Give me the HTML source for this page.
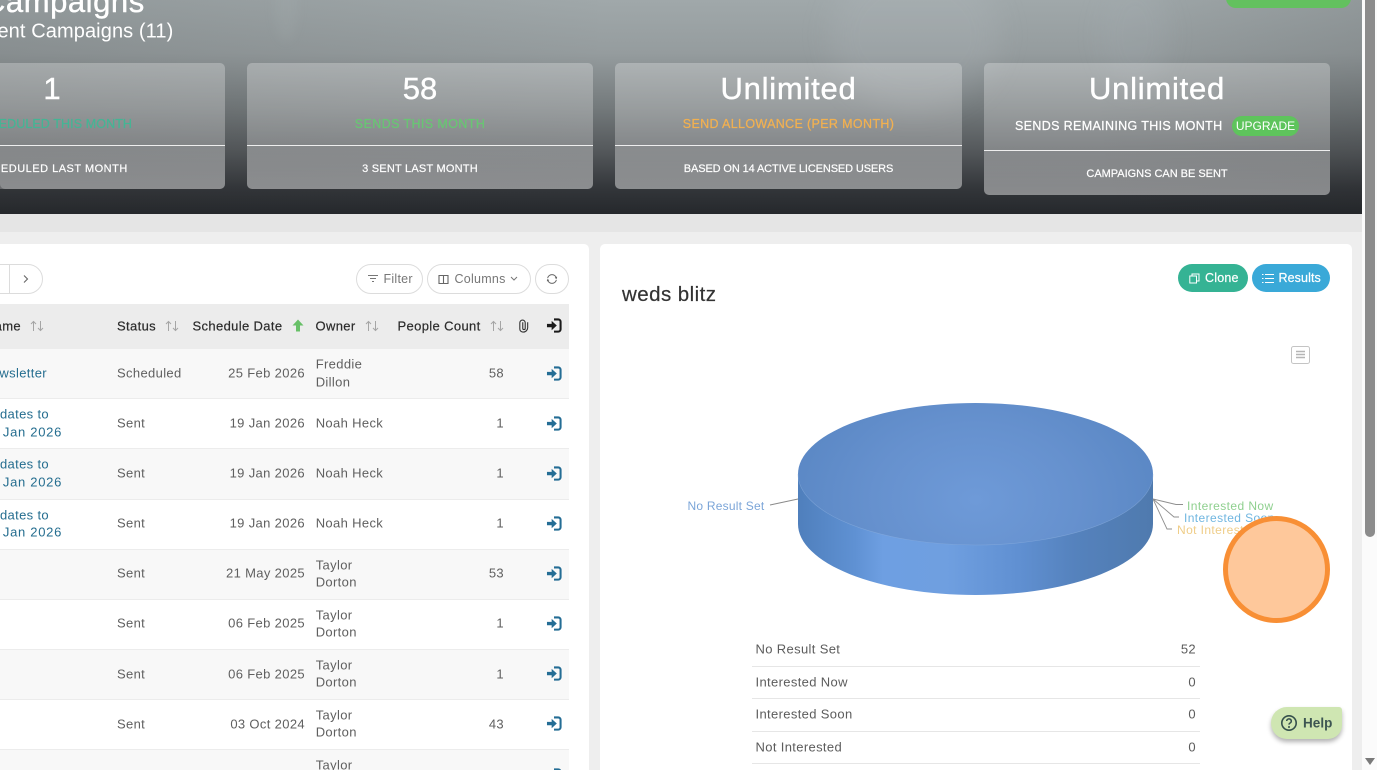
<!DOCTYPE html>
<html><head><meta charset="utf-8"><style>
html,body{margin:0;padding:0;width:1377px;height:770px;overflow:hidden;background:#fdfdfd}
*{box-sizing:border-box}
body{font-family:"Liberation Sans",sans-serif;position:relative}
.a{position:absolute;white-space:nowrap}
.c{transform:translate(-50%,-50%)}
.m{transform:translateY(-50%)}
.r{transform:translate(-100%,-50%)}
.card{position:absolute;background:rgba(255,255,255,.27);border-radius:5px}
.cb{position:absolute;background:linear-gradient(180deg,rgba(255,255,255,.04),rgba(255,255,255,.23));border-radius:0 0 5px 5px}
.t{font-size:13px;letter-spacing:.35px;color:#5f5f5f;margin-top:-1px}
.h{font-size:13px;letter-spacing:.36px;color:#2b2b2b;font-weight:400;-webkit-text-stroke:.2px #2b2b2b}
.l{font-size:13px;letter-spacing:.35px;color:#246d8f;margin-top:-1px}
.j{letter-spacing:.7px}
.row{position:absolute;left:0;width:569px;border-bottom:1px solid #ececec}
.btn{position:absolute;top:264px;height:30px;border:1px solid #dcdcdc;border-radius:15px;background:#fff;font-size:12.5px;color:#666;letter-spacing:.25px}
.s{font-size:13px;letter-spacing:.35px;color:#5c5c5c;margin-top:-1px}
.ln{position:absolute;left:752px;width:448px;height:1px;background:#e6e6e6}
.n{font-size:31px;color:#fff;-webkit-text-stroke:.4px #fff}
.lb{font-size:12.500px;letter-spacing:.4px;-webkit-text-stroke:.25px}
.bt{font-size:11px;color:#fff;-webkit-text-stroke:.2px #fff}
</style></head><body>
<svg width="0" height="0" style="position:absolute"><defs>
<symbol id="in" viewBox="0 0 16 16"><path d="M8 1.500h4.500a2.500 2.500 0 0 1 2.500 2.500v8a2.500 2.500 0 0 1-2.500 2.500H8" fill="none" stroke="currentColor" stroke-width="2.200"/><path d="M.5 6.200h5V3l5.500 5-5.500 5V9.800h-5z" fill="currentColor"/></symbol>
<symbol id="so" viewBox="0 0 14 12"><path d="M3.500 11V1.500M1 4l2.500-2.500L6 4M10.500 1v9.500M8 8l2.500 2.500L13 8" fill="none" stroke="currentColor" stroke-width="1"/></symbol>
</defs></svg>

<!-- header -->
<div class="a" style="left:0;top:0;width:1362px;height:214px;overflow:hidden;background:linear-gradient(180deg,#a0a8aa 0%,#959c9e 25%,#747a7c 50%,#55595c 70%,#33363a 88%,#25282c 100%)">
<div class="a" style="left:0;top:0;width:1362px;height:214px;background:linear-gradient(90deg,rgba(40,40,40,.12),rgba(0,0,0,0) 45%,rgba(0,0,0,0) 80%,rgba(20,20,20,.1))"></div>
<div class="a" style="left:274px;top:-30px;width:24px;height:72px;border-radius:50%;background:rgba(190,205,205,.09);filter:blur(5px)"></div>
<div class="a" style="left:830px;top:-40px;width:170px;height:150px;border-radius:50%;background:rgba(190,200,205,.16);filter:blur(14px)"></div>
<div class="a" style="left:1100px;top:-20px;width:70px;height:110px;border-radius:50%;background:rgba(190,200,205,.1);filter:blur(12px)"></div>
</div>
<div class="a" style="left:1226px;top:-12px;width:125px;height:20px;background:#63c15f;border-radius:10px"></div>
<div class="a m" style="left:-17px;top:2px;font-size:31px;font-weight:400;color:#fff;letter-spacing:.55px;-webkit-text-stroke:.4px #fff">Campaigns</div>
<div class="a m" style="left:-16px;top:31.500px;font-size:20px;color:#fff;letter-spacing:.1px">Sent Campaigns (11)</div>

<div class="card" style="left:-120px;top:63px;width:345px;height:126px"></div>
<div class="card" style="left:247px;top:63px;width:346px;height:126px"></div>
<div class="card" style="left:615px;top:63px;width:347px;height:126px"></div>
<div class="card" style="left:984px;top:63px;width:346px;height:132px"></div>
<div class="cb" style="left:0;top:146px;width:225px;height:43px"></div>
<div class="cb" style="left:247px;top:146px;width:346px;height:43px"></div>
<div class="cb" style="left:615px;top:146px;width:347px;height:43px"></div>
<div class="cb" style="left:984px;top:151px;width:346px;height:44px"></div>
<div class="a" style="left:0;top:145px;width:225px;height:1px;background:#eee"></div>
<div class="a" style="left:247px;top:145px;width:346px;height:1px;background:#eee"></div>
<div class="a" style="left:615px;top:145px;width:347px;height:1px;background:#eee"></div>
<div class="a" style="left:984px;top:150px;width:346px;height:1px;background:#eee"></div>

<div class="a c n" style="left:52px;top:89px">1</div>
<div class="a c n" style="left:420px;top:89px">58</div>
<div class="a c n" style="left:788.500px;top:89px;letter-spacing:.75px">Unlimited</div>
<div class="a c n" style="left:1157px;top:89px;letter-spacing:.75px">Unlimited</div>

<div class="a c lb" style="left:52px;top:124px;color:#45b595;letter-spacing:.1px">SCHEDULED THIS MONTH</div>
<div class="a c lb" style="left:420px;top:124px;color:#68c673">SENDS THIS MONTH</div>
<div class="a c lb" style="left:788.500px;top:124px;color:#f2b050;letter-spacing:.35px">SEND ALLOWANCE (PER MONTH)</div>
<div class="a m lb" style="left:1015px;top:126px;color:#fff;letter-spacing:.35px">SENDS REMAINING THIS MONTH</div>
<div class="a" style="left:1232px;top:116px;width:67px;height:20px;border-radius:10px;background:#5ec45c;color:#fff;font-size:12px;text-align:center;line-height:20px">UPGRADE</div>

<div class="a c bt" style="left:52px;top:169px;letter-spacing:.5px">SCHEDULED LAST MONTH</div>
<div class="a c bt" style="left:420px;top:169px;letter-spacing:.22px">3 SENT LAST MONTH</div>
<div class="a c bt" style="left:788.500px;top:169px;letter-spacing:-.12px">BASED ON 14 ACTIVE LICENSED USERS</div>
<div class="a c bt" style="left:1157px;top:174px;letter-spacing:-.02px">CAMPAIGNS CAN BE SENT</div>

<!-- page bg -->
<div class="a" style="left:0;top:214px;width:1362px;height:18px;background:#e5e5e5"></div>
<div class="a" style="left:0;top:232px;width:1362px;height:538px;background:#eeeeee"></div>

<!-- left panel -->
<div class="a" style="left:-10px;top:244px;width:599px;height:540px;background:#fff;border-radius:5px"></div>
<div class="btn" style="left:-20px;width:63px"></div>
<div class="a" style="left:9px;top:265px;width:1px;height:28px;background:#dcdcdc"></div>
<svg class="a" style="left:22px;top:274px" width="8" height="10" viewBox="0 0 8 10"><path d="M2 1.500 5.500 5 2 8.500" fill="none" stroke="#666" stroke-width="1.100"/></svg>

<div class="btn" style="left:356px;width:67px"></div>
<svg class="a" style="left:367px;top:274px" width="12" height="10" viewBox="0 0 12 10"><path d="M1 1.500h10M3 4.500h6M5 7.500h2" stroke="#777" stroke-width="1"/></svg>
<div class="a m" style="left:383.500px;top:278.500px;font-size:12.500px;color:#777;letter-spacing:.25px">Filter</div>
<div class="btn" style="left:427px;width:104px"></div>
<svg class="a" style="left:438px;top:274px" width="11" height="11" viewBox="0 0 11 11"><path d="M1 1.500h9v8H1zM5.500 1.500v8" fill="none" stroke="#666" stroke-width="1.100"/></svg>
<div class="a m" style="left:454.500px;top:278.500px;font-size:12.500px;color:#777;letter-spacing:.25px">Columns</div>
<svg class="a" style="left:510px;top:276px" width="8" height="6" viewBox="0 0 8 6"><path d="M1 1 4 4 7 1" fill="none" stroke="#777" stroke-width="1"/></svg>
<div class="btn" style="left:535px;width:34px"></div>
<svg class="a" style="left:546px;top:273px" width="12" height="12" viewBox="0 0 12 12"><path d="M1.600 5.200A4.500 4.500 0 0 1 10.400 5.200M10.400 6.800A4.500 4.500 0 0 1 1.600 6.800" fill="none" stroke="#666" stroke-width="1"/><path d="M10.800 3.800 10.400 5.400 9 4.600M1.200 8.200 1.600 6.600 3 7.400" fill="none" stroke="#666" stroke-width=".8"/></svg>

<!-- table -->
<div class="row" style="top:304px;height:45px;background:#ececec;border:0"></div>
<div class="row" style="top:349px;height:50px;background:#f8f8f8"></div>
<div class="row" style="top:399px;height:50px;background:#fff"></div>
<div class="row" style="top:449px;height:51px;background:#f8f8f8"></div>
<div class="row" style="top:500px;height:50px;background:#fff"></div>
<div class="row" style="top:550px;height:50px;background:#f8f8f8"></div>
<div class="row" style="top:600px;height:50px;background:#fff"></div>
<div class="row" style="top:650px;height:50px;background:#f8f8f8"></div>
<div class="row" style="top:700px;height:50px;background:#fff"></div>
<div class="row" style="top:750px;height:20px;background:#f8f8f8;border:0"></div>

<div class="a r h" style="left:21px;top:325.500px">Name</div>
<div class="a m h" style="left:117px;top:325.500px">Status</div>
<div class="a m h" style="left:192.500px;top:326px">Schedule Date</div>
<div class="a m h" style="left:315.500px;top:325.500px">Owner</div>
<div class="a m h" style="left:397.500px;top:325.500px">People Count</div>
<svg class="a" style="left:30px;top:320px;color:#a5a5a5" width="14" height="12"><use href="#so"/></svg>
<svg class="a" style="left:165px;top:320px;color:#a5a5a5" width="14" height="12"><use href="#so"/></svg>
<svg class="a" style="left:365px;top:320px;color:#a5a5a5" width="14" height="12"><use href="#so"/></svg>
<svg class="a" style="left:489.500px;top:320px;color:#a5a5a5" width="14" height="12"><use href="#so"/></svg>
<svg class="a" style="left:292px;top:319px" width="12" height="13" viewBox="0 0 12 13"><path d="M6 .5 11.500 6.500H8V12.500H4V6.500H.5z" fill="#67c067"/></svg>
<svg class="a" style="left:518px;top:319px" width="11" height="14" viewBox="2.400 1.400 8.400 11.400"><path d="M6 4V9a1 1 0 0 0 2 0V4.500a2.200 2.200 0 0 0-4.400 0V9.500a2.500 2.500 0 0 0 2.500 2.500h.3a3.500 3.500 0 0 0 3.600-3.500V4" fill="none" stroke="#333" stroke-width=".9"/></svg>
<svg class="a" style="left:545.500px;top:318px;color:#1a1a1a" width="16" height="15"><use href="#in"/></svg>

<div class="a r l" style="left:47px;top:373.500px">Newsletter</div>
<div class="a r l" style="left:49px;top:414.500px">Updates to</div>
<div class="a r l j" style="left:62px;top:432.500px">19 Jan 2026</div>
<div class="a r l" style="left:49px;top:464.500px">Updates to</div>
<div class="a r l j" style="left:62px;top:482.500px">19 Jan 2026</div>
<div class="a r l" style="left:49px;top:515.500px">Updates to</div>
<div class="a r l j" style="left:62px;top:532.500px">19 Jan 2026</div>

<div class="a m t" style="left:117px;top:373.500px">Scheduled</div><div class="a r t" style="left:305px;top:373.500px">25 Feb 2026</div><div class="a m t" style="left:315.700px;top:364.500px">Freddie</div><div class="a m t" style="left:315.700px;top:382.500px">Dillon</div><div class="a r t" style="left:504px;top:373.500px">58</div>
<div class="a m t" style="left:117px;top:423.500px">Sent</div><div class="a r t" style="left:305px;top:423.500px">19 Jan 2026</div><div class="a m t" style="left:315.700px;top:423.500px">Noah Heck</div><div class="a r t" style="left:504px;top:423.500px">1</div>
<div class="a m t" style="left:117px;top:473.500px">Sent</div><div class="a r t" style="left:305px;top:473.500px">19 Jan 2026</div><div class="a m t" style="left:315.700px;top:473.500px">Noah Heck</div><div class="a r t" style="left:504px;top:473.500px">1</div>
<div class="a m t" style="left:117px;top:523.500px">Sent</div><div class="a r t" style="left:305px;top:523.500px">19 Jan 2026</div><div class="a m t" style="left:315.700px;top:523.500px">Noah Heck</div><div class="a r t" style="left:504px;top:523.500px">1</div>
<div class="a m t" style="left:117px;top:573.500px">Sent</div><div class="a r t" style="left:305px;top:573.500px">21 May 2025</div><div class="a m t" style="left:315.700px;top:565.500px">Taylor</div><div class="a m t" style="left:315.700px;top:582.500px">Dorton</div><div class="a r t" style="left:504px;top:573.500px">53</div>
<div class="a m t" style="left:117px;top:623.500px">Sent</div><div class="a r t" style="left:305px;top:623.500px">06 Feb 2025</div><div class="a m t" style="left:315.700px;top:615.500px">Taylor</div><div class="a m t" style="left:315.700px;top:632.500px">Dorton</div><div class="a r t" style="left:504px;top:623.500px">1</div>
<div class="a m t" style="left:117px;top:674.500px">Sent</div><div class="a r t" style="left:305px;top:674.500px">06 Feb 2025</div><div class="a m t" style="left:315.700px;top:665.500px">Taylor</div><div class="a m t" style="left:315.700px;top:682.500px">Dorton</div><div class="a r t" style="left:504px;top:674.500px">1</div>
<div class="a m t" style="left:117px;top:724.500px">Sent</div><div class="a r t" style="left:305px;top:724.500px">03 Oct 2024</div><div class="a m t" style="left:315.700px;top:715.500px">Taylor</div><div class="a m t" style="left:315.700px;top:732.500px">Dorton</div><div class="a r t" style="left:504px;top:724.500px">43</div>
<div class="a m t" style="left:117px;top:775.500px">Sent</div><div class="a r t" style="left:305px;top:775.500px">30 Jul 2024</div><div class="a m t" style="left:315.700px;top:765.500px">Taylor</div><div class="a r t" style="left:504px;top:775.500px">1</div>

<svg class="a" style="left:545.500px;top:366px;color:#246d95" width="16" height="15"><use href="#in"/></svg>
<svg class="a" style="left:545.500px;top:416px;color:#246d95" width="16" height="15"><use href="#in"/></svg>
<svg class="a" style="left:545.500px;top:466px;color:#246d95" width="16" height="15"><use href="#in"/></svg>
<svg class="a" style="left:545.500px;top:516px;color:#246d95" width="16" height="15"><use href="#in"/></svg>
<svg class="a" style="left:545.500px;top:566px;color:#246d95" width="16" height="15"><use href="#in"/></svg>
<svg class="a" style="left:545.500px;top:616px;color:#246d95" width="16" height="15"><use href="#in"/></svg>
<svg class="a" style="left:545.500px;top:666px;color:#246d95" width="16" height="15"><use href="#in"/></svg>
<svg class="a" style="left:545.500px;top:716px;color:#246d95" width="16" height="15"><use href="#in"/></svg>
<svg class="a" style="left:545.500px;top:767.500px;color:#246d95" width="16" height="15"><use href="#in"/></svg>

<!-- right panel -->
<div class="a" style="left:600px;top:244px;width:752px;height:540px;background:#fff;border-radius:5px"></div>
<div class="a m" style="left:622px;top:295px;font-size:20.500px;color:#333;letter-spacing:.45px;-webkit-text-stroke:.2px #333">weds blitz</div>

<div class="a" style="left:1178px;top:264px;width:70px;height:28px;border-radius:14px;background:#35b394"></div>
<svg class="a" style="left:1189px;top:273px" width="11" height="11" viewBox="0 0 11 11"><path d="M.8 3h6.700v7H.8zM3 3V1h7v7H7.500" fill="none" stroke="#fff" stroke-width="1"/></svg>
<div class="a m" style="left:1205px;top:278px;font-size:12.500px;color:#fff;letter-spacing:.2px;-webkit-text-stroke:.2px #fff">Clone</div>
<div class="a" style="left:1252px;top:264px;width:78px;height:28px;border-radius:14px;background:#3aa9d8"></div>
<svg class="a" style="left:1262px;top:273px" width="12" height="11" viewBox="0 0 12 11"><path d="M3 1.500h9M3 5.500h9M3 9.500h9M0 1.500h1.500M0 5.500h1.500M0 9.500h1.500" stroke="#fff" stroke-width="1"/></svg>
<div class="a m" style="left:1278.500px;top:278px;font-size:12.500px;color:#fff;letter-spacing:.1px;-webkit-text-stroke:.2px #fff">Results</div>

<svg class="a" style="left:1291px;top:346px" width="19" height="18" viewBox="0 0 19 18"><rect x=".5" y=".5" width="18" height="17" rx="2" fill="#fff" stroke="#c4c4c4"/><path d="M5 5.500h9M5 8.500h9M5 11.500h9" stroke="#b5b5b5" stroke-width="1.400"/></svg>

<!-- pie -->
<svg class="a" style="left:660px;top:395px" width="640" height="210" viewBox="660 395 640 210">
<defs>
<linearGradient id="sd" x1="798" x2="1153" y1="0" y2="0" gradientUnits="userSpaceOnUse">
<stop offset="0" stop-color="#4f7fbc"/><stop offset=".16" stop-color="#5f91d3"/><stop offset=".24" stop-color="#6e9fe2"/><stop offset=".42" stop-color="#6f9fe0"/><stop offset=".62" stop-color="#6090d2"/><stop offset=".78" stop-color="#5582bd"/><stop offset="1" stop-color="#4f7aae"/>
</linearGradient>
<radialGradient id="tp" cx="975.500" cy="500" r="185" gradientUnits="userSpaceOnUse" gradientTransform="translate(0 130) scale(1 .74)">
<stop offset="0" stop-color="#6e9ad8"/><stop offset=".55" stop-color="#6691ce"/><stop offset="1" stop-color="#5b88c5"/>
</radialGradient>
</defs>
<path d="M798 474v50a177.500 71 0 0 0 355 0v-50z" fill="url(#sd)"/>
<ellipse cx="975.500" cy="474" rx="177.500" ry="71" fill="url(#tp)"/>
<path d="M798 474a177.500 71 0 0 0 355 0" fill="none" stroke="#8fb2e0" stroke-width=".6" opacity=".55"/>
<path d="M770 505 798 499" fill="none" stroke="#8a8a8a" stroke-width="1"/>
<path d="M1153 499 1176 504.500H1183M1153 499 1174 517H1179M1153 499 1167 529H1172" fill="none" stroke="#8f8f8f" stroke-width=".9"/>
<text x="687.500" y="510" font-family="Liberation Sans" font-size="12" letter-spacing=".22" fill="#7ba5d8">No Result Set</text>
<text x="1187" y="510" font-family="Liberation Sans" font-size="12" letter-spacing=".42" fill="#8fd08f">Interested Now</text>
<text x="1184" y="522" font-family="Liberation Sans" font-size="12" letter-spacing=".4" fill="#70b6e0">Interested Soon</text>
<text x="1177" y="534" font-family="Liberation Sans" font-size="12" letter-spacing=".4" fill="#efcd88">Not Interested</text>
</svg>

<div class="a" style="left:1223px;top:516px;width:107px;height:107px;border-radius:50%;background:#fec89b;border:5px solid #f88f35"></div>

<!-- stats -->
<div class="a m s" style="left:755.500px;top:649.500px">No Result Set</div><div class="a r s" style="left:1196px;top:649.500px">52</div>
<div class="ln" style="top:666px"></div>
<div class="a m s" style="left:755.500px;top:682.500px">Interested Now</div><div class="a r s" style="left:1196px;top:682.500px">0</div>
<div class="ln" style="top:698px"></div>
<div class="a m s" style="left:755.500px;top:714.500px">Interested Soon</div><div class="a r s" style="left:1196px;top:714.500px">0</div>
<div class="ln" style="top:731px"></div>
<div class="a m s" style="left:755.500px;top:747.500px">Not Interested</div><div class="a r s" style="left:1196px;top:747.500px">0</div>
<div class="ln" style="top:763px"></div>

<!-- help -->
<div class="a" style="left:1271px;top:707px;width:71px;height:32px;background:#cfe6b2;border-radius:16px 3px 14px 16px;box-shadow:0 3px 5px rgba(0,0,0,.3)"></div>
<svg class="a" style="left:1280px;top:714px" width="18" height="18" viewBox="0 0 18 18"><circle cx="9" cy="9" r="7.200" fill="none" stroke="#35504c" stroke-width="1.600"/><path d="M6.700 7a2.300 2.200 0 1 1 3.400 2c-.8.500-1.100.9-1.100 1.600" fill="none" stroke="#35504c" stroke-width="1.500"/><circle cx="9" cy="13" r="1" fill="#35504c"/></svg>
<div class="a m" style="left:1303px;top:723px;font-size:13.500px;font-weight:700;color:#3d5552;letter-spacing:.05px">Help</div>

<!-- scrollbar -->
<div class="a" style="left:1362px;top:0;width:15px;height:770px;background:#fbfbfb"></div>
<div class="a" style="left:1365px;top:0;width:10px;height:537px;background:#8c8c8c;border-radius:0 0 5px 5px"></div>
<svg class="a" style="left:1365px;top:758px" width="10" height="8" viewBox="0 0 10 8"><path d="M0 0H10L5 7z" fill="#7a7a7a"/></svg>
</body></html>
